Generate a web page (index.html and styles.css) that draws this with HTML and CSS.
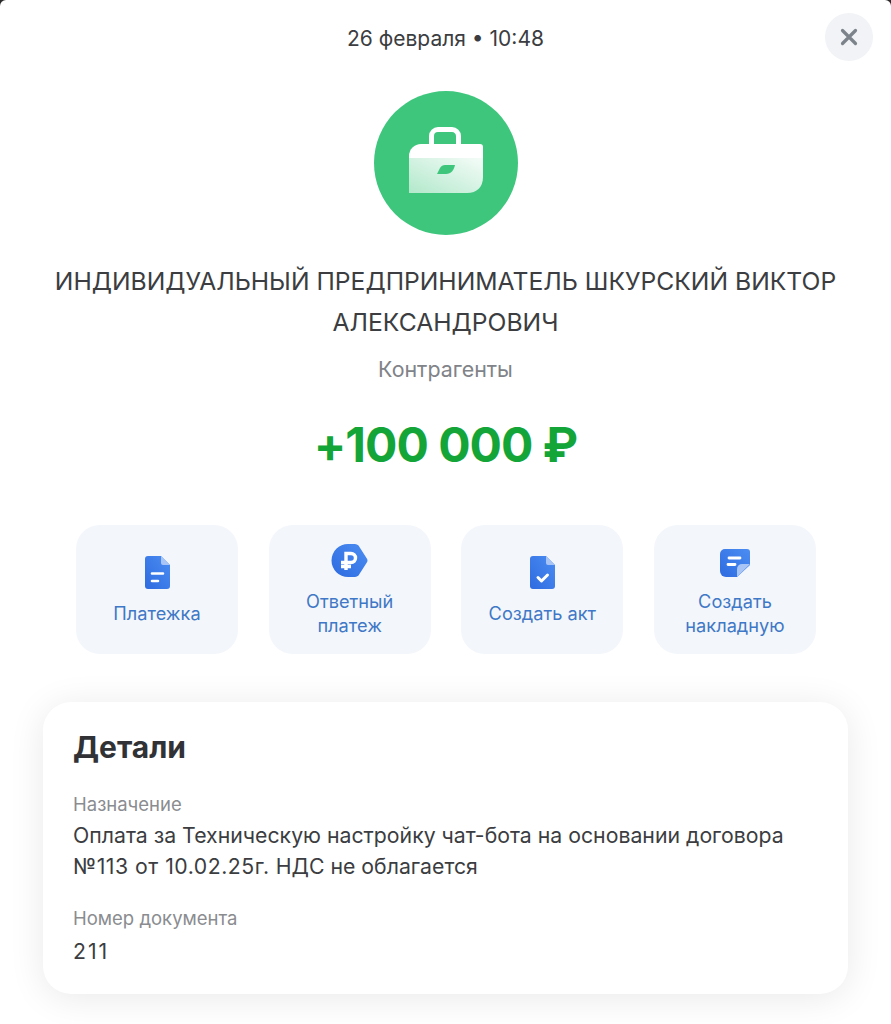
FILE: index.html
```html
<!DOCTYPE html>
<html lang="ru">
<head>
<meta charset="utf-8">
<title>Платёж</title>
<link rel="stylesheet" href="styles.css">
</head>
<body>
<main class="sheet">
  <header class="topbar">
    <div class="date">26 февраля • 10:48</div>
    <button class="close" aria-label="Закрыть">
      <svg width="18" height="18" viewBox="0 0 18 18"><path d="M2.500 2.500L15.500 15.500M15.500 2.500L2.500 15.500" stroke="#7d838a" stroke-width="3.200" stroke-linecap="round"/></svg>
    </button>
  </header>

  <div class="avatar">
    <svg width="74" height="66" viewBox="0 0 74 66">
      <defs>
        <linearGradient id="bag" x1="0" y1="1" x2="1" y2="0">
          <stop offset="0" stop-color="#fff" stop-opacity=".6"/>
          <stop offset="1" stop-color="#fff" stop-opacity=".95"/>
        </linearGradient>
      </defs>
      <path d="M22.500 17V9a6.500 6.500 0 0 1 6.500-6.500h14a6.500 6.500 0 0 1 6.500 6.500v8" fill="none" stroke="#fff" stroke-width="5"/>
      <path d="M0 66V31h74v19c0 10-6 16-16 16z" fill="url(#bag)"/>
      <path d="M0 31v-2a12 12 0 0 1 12-12h59a3 3 0 0 1 3 3v11z" fill="#fff"/>
      <path d="M31 41c1-2 3-3 5-3h10c-1 5-4 9-9 9H28z" fill="#3ec67d"/>
    </svg>
  </div>

  <h1 class="name">ИНДИВИДУАЛЬНЫЙ ПРЕДПРИНИМАТЕЛЬ ШКУРСКИЙ ВИКТОР АЛЕКСАНДРОВИЧ</h1>
  <div class="category">Контрагенты</div>
  <div class="amount">+100 000 ₽</div>

  <section class="actions">
    <a class="tile">
      <svg class="icon" width="25" height="33" viewBox="0 0 25 33">
        <defs>
          <linearGradient id="blue1" x1="0" y1="1" x2="1" y2="0"><stop offset="0" stop-color="#2e6be0"/><stop offset="1" stop-color="#4b8df2"/></linearGradient>
        </defs>
        <path d="M3 0h13l9 9v21a3 3 0 0 1-3 3H3a3 3 0 0 1-3-3V3a3 3 0 0 1 3-3z" fill="url(#blue1)"/>
        <path d="M16 0l9 9h-7a2 2 0 0 1-2-2z" fill="#a9c5f5"/>
        <path d="M7 17.500h11M7 25h6" stroke="#fff" stroke-width="2.600" stroke-linecap="round"/>
      </svg>
      <span>Платежка</span>
    </a>
    <a class="tile">
      <svg class="icon" width="37" height="33" viewBox="0 0 37 33">
        <path d="M17 0h7a5 5 0 0 1 3.500 1.500L35.500 14a4 4 0 0 1 0 5L27.500 31.500a5 5 0 0 1-3.500 1.500H17A16.500 16.500 0 0 1 17 0z" fill="url(#blue1)"/>
        <path d="M15 26V9.500h5a4.500 4.500 0 0 1 0 9H10M10 22.500h10" fill="none" stroke="#fff" stroke-width="3.400"/>
      </svg>
      <span>Ответный платеж</span>
    </a>
    <a class="tile">
      <svg class="icon" width="25" height="33" viewBox="0 0 25 33">
        <path d="M3 0h13l9 9v21a3 3 0 0 1-3 3H3a3 3 0 0 1-3-3V3a3 3 0 0 1 3-3z" fill="url(#blue1)"/>
        <path d="M16 0l9 9h-7a2 2 0 0 1-2-2z" fill="#a9c5f5"/>
        <path d="M8 21.500l3.500 3.500 6-6" fill="none" stroke="#fff" stroke-width="3" stroke-linecap="round" stroke-linejoin="round"/>
      </svg>
      <span>Создать акт</span>
    </a>
    <a class="tile">
      <svg class="icon" width="30" height="33" viewBox="0 -5 30 33">
        <path d="M5 0h22a3 3 0 0 1 3 3v13L17 28H6a6 6 0 0 1-6-6V5a5 5 0 0 1 5-5z" fill="url(#blue1)"/>
        <path d="M30 15L17 28v-8a5 5 0 0 1 5-5z" fill="#a9c5f5"/>
        <path d="M9 9h11M8 15.500h7" stroke="#fff" stroke-width="2.800" stroke-linecap="round"/>
      </svg>
      <span>Создать накладную</span>
    </a>
  </section>

  <section class="card">
    <h2 class="card-title">Детали</h2>
    <div class="field">
      <div class="label">Назначение</div>
      <div class="value">Оплата за Техническую настройку чат-бота на основании договора <span class="digits">№113 от 10.02.25г.</span> НДС не облагается</div>
    </div>
    <div class="field">
      <div class="label">Номер документа</div>
      <div class="value value-number">211</div>
    </div>
  </section>
</main>
</body>
</html>
```
FILE: styles.css
```css
* { box-sizing: border-box; }
html, body { margin: 0; height: 100%; background: #2a2a2a; }
body { font-family: Inter, "Liberation Sans", sans-serif; color: #303236; overflow: hidden; }
.sheet { width: 891px; height: 1024px; padding-top: 12px; display: flex; flex-direction: column; align-items: center; background: #fff; border-radius: 6px 6px 0 0; }
.topbar { width: 100%; height: 48px; display: flex; align-items: center; justify-content: center; position: relative; }
.date { margin-top: 5px; font-size: 21px; line-height: 28px; color: #3b3d41; }
.close { position: absolute; right: 18px; top: 1px; width: 48px; height: 48px; border: 0; border-radius: 50%; background: #f1f3f6; display: flex; align-items: center; justify-content: center; padding: 0; }
.avatar { width: 144px; height: 144px; margin-top: 31px; border-radius: 50%; background: #3ec67d; display: flex; align-items: center; justify-content: center; padding-bottom: 6px; }
.name { margin: 26px 0 0; width: 810px; font-size: 24.7px; line-height: 41px; font-weight: 400; text-align: center; color: #3b3d41; }
.category { margin-top: 12px; font-size: 21.4px; line-height: 28px; color: #808388; }
.amount { margin-top: 32px; font-size: 48px; line-height: 60px; font-weight: 700; letter-spacing: -1px; color: #13a538; }
.actions { margin: 50px 0 0 1px; width: 740px; display: flex; justify-content: space-between; }
.tile { width: 162px; height: 129px; border-radius: 24px; background: #f3f6fa; display: flex; flex-direction: column; align-items: center; justify-content: center; gap: 12px; padding: 2px 16px 0; text-align: center; font-size: 18.2px; line-height: 24px; color: #3f78c6; }
.icon { display: block; flex: none; }
.card { margin-top: 48px; width: 805px; height: 292px; border-radius: 28px; background: #fff; box-shadow: 0 4px 36px rgba(0, 0, 0, .09); padding: 24px 30px; }
.card-title { margin: 0; font-size: 30px; line-height: 42px; font-weight: 700; color: #303236; }
.field { margin-top: 23px; }
.field + .field { margin-top: 23px; }
.label { font-size: 18.5px; line-height: 26px; color: #8a8c90; }
.value { margin-top: 3px; font-size: 21.25px; line-height: 31px; color: #3b3d41; }
.digits { letter-spacing: .5px; }
.value-number { margin-top: 5px; letter-spacing: 2px; }
```
